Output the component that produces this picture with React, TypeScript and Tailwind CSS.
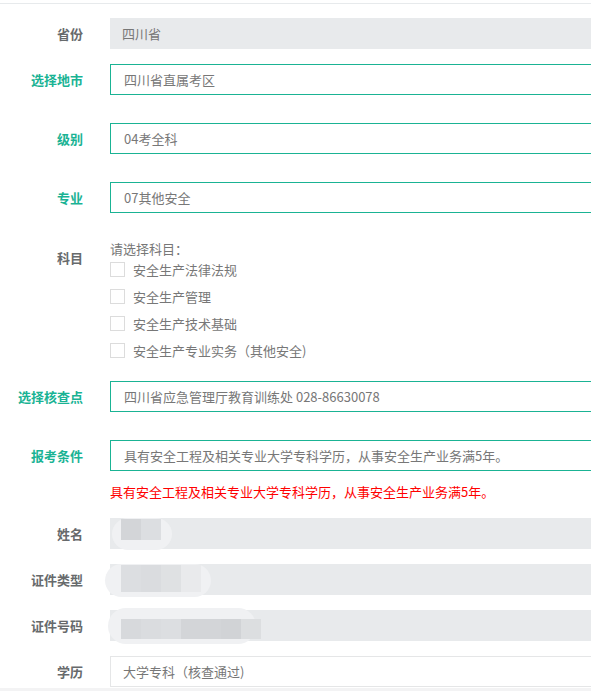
import React from 'react';

const font = { fontFamily: '"Microsoft YaHei", "Noto Sans CJK SC", "Noto Sans", sans-serif' };

type Tone = 'gray' | 'green' | 'plain';

const labelTone: Record<Tone, string> = {
  gray: 'text-[#676a6c]',
  green: 'text-[#1ab394]',
  plain: 'text-[#676a6c]',
};

const boxTone: Record<Tone, string> = {
  gray: 'bg-[#e8eaec] border-[#e8eaec]',
  green: 'bg-white border-[#1ab394]',
  plain: 'bg-white border-[#e5e6e7]',
};

const Row = ({
  label,
  tone,
  children,
  className = '',
}: {
  label: string;
  tone: Tone;
  children?: React.ReactNode;
  className?: string;
}) => (
  <div className={`flex items-center ${className}`}>
    <div className={`w-[83px] shrink-0 text-right text-[13px] font-semibold ${labelTone[tone]}`}>{label}</div>
    <div
      className={`relative ml-[27px] flex h-[31px] w-[520px] shrink-0 items-center border pl-[13px] text-[13px] text-[#777] ${boxTone[tone]}`}
    >
      {children}
    </div>
  </div>
);

// pixelated, blurred personal data
const Mosaic = ({
  left,
  top,
  width,
  height,
  blockTop,
  blockHeight,
  blocks,
}: {
  left: number;
  top: number;
  width: number;
  height: number;
  blockTop: number;
  blockHeight: number;
  blocks: string[];
}) => (
  <div
    className="absolute rounded-full bg-[#f0f1f3]"
    style={{ left, top, width, height }}
  >
    <div className="absolute flex" style={{ left: 10 - left, top: blockTop - top, height: blockHeight }}>
      {blocks.map((c, i) => (
        <div key={i} className="h-full w-[20px]" style={{ backgroundColor: c }} />
      ))}
    </div>
  </div>
);

const subjects = ['安全生产法律法规', '安全生产管理', '安全生产技术基础', '安全生产专业实务（其他安全)'];

export default function App() {
  return (
    <div className="w-[591px] min-h-[691px] overflow-hidden bg-white" style={font}>
      <div className="mt-[3px] h-px bg-[#e7eaec]" />

      <Row label="省份" tone="gray" className="mt-[14px]">
        <span className="-ml-[2px]">四川省</span>
      </Row>
      <Row label="选择地市" tone="green" className="mt-[15px]">
        四川省直属考区
      </Row>
      <Row label="级别" tone="green" className="mt-[28px]">
        04考全科
      </Row>
      <Row label="专业" tone="green" className="mt-[28px]">
        07其他安全
      </Row>

      <div className="mt-[28px] flex">
        <div className="w-[83px] shrink-0 pt-[7px] text-right text-[13px] font-semibold text-[#676a6c]">科目</div>
        <div className="ml-[27px] text-[13px] text-[#777]">
          <div className="h-[15px] leading-[15px]">请选择科目：</div>
          {subjects.map((s) => (
            <div key={s} className="flex h-[27px] items-center">
              <span className="h-[15px] w-[15px] border border-[#dcdcdc] bg-white" />
              <span className="ml-[8px]">{s}</span>
            </div>
          ))}
        </div>
      </div>

      <Row label="选择核查点" tone="green" className="mt-[17px]">
        四川省应急管理厅教育训练处 028-86630078
      </Row>
      <Row label="报考条件" tone="green" className="mt-[28px]">
        具有安全工程及相关专业大学专科学历，从事安全生产业务满5年。
      </Row>

      <div className="mt-[13px] ml-[110px] h-[16px] text-[13px] leading-[16px] text-[#ff0000]">
        具有安全工程及相关专业大学专科学历，从事安全生产业务满5年。
      </div>

      <Row label="姓名" tone="gray" className="mt-[18px]">
        <Mosaic
          left={1}
          top={-1}
          width={60}
          height={32}
          blockTop={0}
          blockHeight={21}
          blocks={['#d3d5d8', '#dcdee1']}
        />
      </Row>
      <Row label="证件类型" tone="gray" className="mt-[15px]">
        <Mosaic
          left={-6}
          top={-1}
          width={106}
          height={33}
          blockTop={0}
          blockHeight={27}
          blocks={['#dcdee1', '#dadcdf', '#dfe1e3', '#e9eaec']}
        />
      </Row>
      <Row label="证件号码" tone="gray" className="mt-[15px]">
        <Mosaic
          left={-3}
          top={-3}
          width={148}
          height={36}
          blockTop={8}
          blockHeight={20}
          blocks={['#d7d9dc', '#dadcdf', '#dcdee1', '#d3d5d8', '#d3d5d8', '#d1d3d6', '#dcdee0']}
        />
      </Row>
      <Row label="学历" tone="plain" className="mt-[15px]">
        <span className="-ml-px">大学专科（核查通过)</span>
      </Row>

      <div className="mt-px h-[10px] bg-[#f3f3f4]" />
    </div>
  );
}
